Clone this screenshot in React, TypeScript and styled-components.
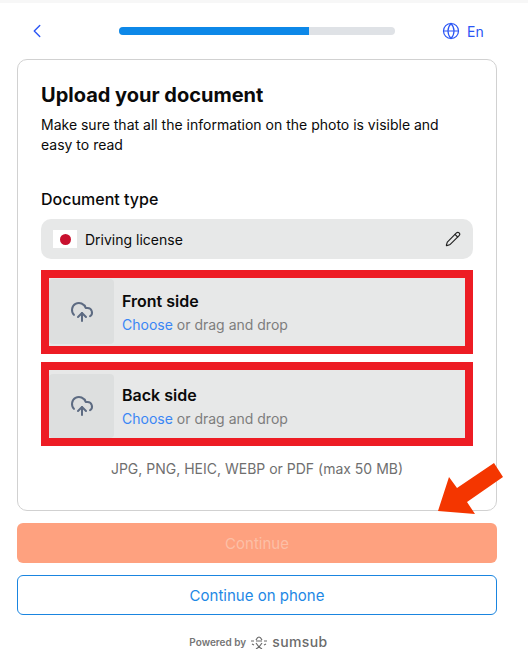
import React from 'react';
import styled, { createGlobalStyle } from 'styled-components';
import { ChevronLeft, CloudUpload, Globe, Pencil } from 'lucide-react';

const GlobalStyle = createGlobalStyle`
  html, body {
    margin: 0;
    padding: 0;
    background: #fff;
  }
  * {
    box-sizing: border-box;
  }
`;

const Page = styled.div`
  position: relative;
  width: 528px;
  height: 664px;
  overflow: hidden;
  background: #fff;
  border-top: 3px solid #f7f7f7;
  font-family: Inter, "Liberation Sans", sans-serif;
  color: #0a0a0a;
`;

const Header = styled.header`
  display: flex;
  align-items: center;
  height: 56px;
  padding-left: 26px;
`;

const BackButton = styled.div`
  display: flex;
  color: #2a55f5;
`;

const Progress = styled.div`
  width: 276px;
  height: 8px;
  margin-left: 71px;
  border-radius: 4px;
  background: #dfe2e6;
  overflow: hidden;
`;

const ProgressFill = styled.div`
  height: 100%;
  background: #0d88e8;
`;

const Lang = styled.div`
  display: flex;
  align-items: center;
  gap: 7px;
  margin-left: 47px;
  font-size: 14px;
  color: #2a55f5;
`;

const Card = styled.section`
  width: 480px;
  height: 452px;
  margin-left: 17px;
  padding: 22px 23px 0;
  border: 1px solid #d1d1d1;
  border-radius: 10px;
`;

const Title = styled.h1`
  margin: 0;
  font-size: 20px;
  line-height: 26px;
  font-weight: 700;
`;

const Description = styled.p`
  margin: 7px 0 0;
  font-size: 14px;
  line-height: 20px;
`;

const FieldLabel = styled.div`
  margin-top: 34px;
  font-size: 16px;
  line-height: 20px;
  font-weight: 500;
`;

const Select = styled.div`
  display: flex;
  align-items: center;
  height: 40px;
  margin-top: 10px;
  padding: 0 12px;
  border-radius: 10px;
  background: #e7e8e8;
  font-size: 14px;
`;

const Flag = styled.div`
  display: flex;
  align-items: center;
  justify-content: center;
  width: 24px;
  height: 18px;
  margin-right: 8px;
  background: #fff;
`;

const FlagDot = styled.div`
  width: 11px;
  height: 11px;
  border-radius: 50%;
  background: #c8102e;
`;

const SelectText = styled.span`
  flex: 1;
`;

const UploadBox = styled.div<{ $top: number; $padTop: number; $padBottom: number }>`
  display: flex;
  height: 84px;
  margin-top: ${({ $top }) => $top}px;
  padding-top: ${({ $padTop }) => $padTop}px;
  padding-bottom: ${({ $padBottom }) => $padBottom}px;
  border: 8px solid #ed1c24;
  background: #e7e8e8;
`;

const Thumb = styled.div`
  display: flex;
  align-items: center;
  justify-content: center;
  width: 65px;
  margin-right: 8px;
  border-radius: 4px;
  background: #dddfdf;
  color: #5d6b82;
`;

const UploadText = styled.div<{ $shift: number }>`
  align-self: center;
  margin-top: ${({ $shift }) => $shift}px;
`;

const UploadTitle = styled.div`
  font-size: 16px;
  line-height: 22px;
  font-weight: 600;
`;

const UploadHint = styled.div`
  margin-top: 3px;
  font-size: 14px;
  line-height: 20px;
  color: #7d7d7d;
`;

const ChooseLink = styled.span`
  color: #3a86f5;
`;

const Formats = styled.div`
  margin-top: 13px;
  font-size: 14px;
  line-height: 20px;
  text-align: center;
  color: #6f6f6f;
`;

const Actions = styled.div`
  display: flex;
  flex-direction: column;
  gap: 12px;
  margin: 12px 31px 0 17px;
`;

const Button = styled.div<{ $primary?: boolean }>`
  display: flex;
  align-items: center;
  justify-content: center;
  height: 40px;
  border-radius: 6px;
  font-size: 15px;
  color: ${({ $primary }) => ($primary ? '#fcbfa6' : '#1e88e5')};
  background: ${({ $primary }) => ($primary ? '#fea17f' : '#fff')};
  border: ${({ $primary }) => ($primary ? 'none' : '1px solid #1a85e0')};
`;

const Footer = styled.footer`
  display: flex;
  align-items: center;
  justify-content: center;
  gap: 4px;
  margin-top: 18px;
  padding-right: 11px;
  font-size: 10px;
  font-weight: 600;
  color: #757575;
`;

const BrandName = styled.span`
  font-size: 14px;
  font-weight: 500;
  letter-spacing: 0.4px;
  color: #6b6b6b;
`;

const ArrowOverlay = styled.svg`
  position: absolute;
  left: 430px;
  top: 455px;
`;

const UploadRow: React.FC<{
  title: string;
  top: number;
  padTop: number;
  padBottom: number;
  shift: number;
}> = ({ title, top, padTop, padBottom, shift }) => (
  <UploadBox $top={top} $padTop={padTop} $padBottom={padBottom}>
    <Thumb>
      <CloudUpload size={24} strokeWidth={2} />
    </Thumb>
    <UploadText $shift={shift}>
      <UploadTitle>{title}</UploadTitle>
      <UploadHint>
        <ChooseLink>Choose</ChooseLink> or drag and drop
      </UploadHint>
    </UploadText>
  </UploadBox>
);

const App: React.FC = () => {
  return (
    <Page>
      <GlobalStyle />
      <Header>
        <BackButton>
          <ChevronLeft size={22} strokeWidth={1.5} />
        </BackButton>
        <Progress>
          <ProgressFill style={{ width: '69%' }} />
        </Progress>
        <Lang>
          <Globe size={18} strokeWidth={1.6} />
          En
        </Lang>
      </Header>
      <Card>
        <Title>Upload your document</Title>
        <Description>
          Make sure that all the information on the photo is visible and easy to read
        </Description>
        <FieldLabel>Document type</FieldLabel>
        <Select>
          <Flag>
            <FlagDot />
          </Flag>
          <SelectText>Driving license</SelectText>
          <Pencil size={16} strokeWidth={1.7} color="#222" />
        </Select>
        <UploadRow title="Front side" top={11} padTop={1} padBottom={2} shift={2} />
        <UploadRow title="Back side" top={8} padTop={4} padBottom={0} shift={0} />
        <Formats>JPG, PNG, HEIC, WEBP or PDF (max 50 MB)</Formats>
      </Card>
      <Actions>
        <Button $primary>Continue</Button>
        <Button>Continue on phone</Button>
      </Actions>
      <Footer>
        Powered by
        <svg width="18" height="14" viewBox="0 0 18 14" fill="none" stroke="#6b6b6b" strokeWidth="1.2">
          <path d="M6 5 Q9 -1 12 5 M1 6 H4 M6 6 H12 M14 6 H17 M6 8 L9 12 L12 8 M9 12 L6 14 M9 12 L12 14 M2 9 L4 10 M16 9 L14 10" />
        </svg>
        <BrandName>sumsub</BrandName>
      </Footer>
      <ArrowOverlay width="76" height="62" viewBox="0 0 76 62">
        <path d="M64 5 L73 19 L37 44 L45 56 L8 53 L19 19 L27 30 Z" fill="#f43600" />
      </ArrowOverlay>
    </Page>
  );
};

export default App;
